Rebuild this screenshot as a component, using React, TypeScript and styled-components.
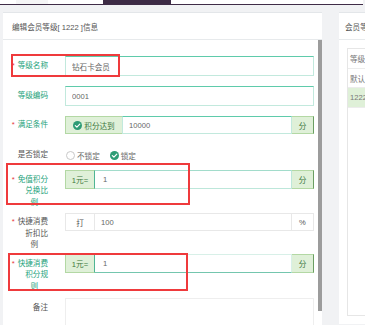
import React from "react";
import styled, { createGlobalStyle } from "styled-components";

const GlobalStyle = createGlobalStyle`
  html, body { margin: 0; padding: 0; width: 365px; height: 325px; overflow: hidden; background: #f1f2f4; }
  body { font-family: "Liberation Sans", "Noto Sans CJK SC", sans-serif; font-size: 7.6px; color: #555; }
  * { box-sizing: border-box; }
`;

const TopBar = styled.div`
  display: flex;
  width: 363px;
  height: 5px;
  background: #fff;
  border-bottom: 1px solid #3f2c47;
`;

const TopTab = styled.div<{ $w: number; $bg: string }>`
  flex: none;
  width: ${(p) => p.$w}px;
  background: ${(p) => p.$bg};
`;

const Main = styled.div`
  display: flex;
  align-items: flex-start;
  gap: 17px;
  padding: 7px 0 0 3px;
  height: 320px;
`;

const Card = styled.div<{ $w: number; $h: number }>`
  position: relative;
  flex: none;
  display: flex;
  flex-direction: column;
  width: ${(p) => p.$w}px;
  height: ${(p) => p.$h}px;
  background: #fff;
  border-top: 1px solid #e3e6e9;
`;

const CardHeader = styled.div<{ $pl: number }>`
  flex: none;
  display: flex;
  align-items: center;
  height: 27px;
  padding-left: ${(p) => p.$pl}px;
  border-bottom: 1px solid #e7eaec;
  color: #555;
  white-space: nowrap;
`;

const FormBody = styled.div`
  position: relative;
  flex: 1;
  padding-top: 16px;
  overflow: hidden;
`;

const ScrollThumb = styled.div`
  position: absolute;
  right: 0;
  top: 0;
  width: 4px;
  height: 271px;
  background: #9c9c9c;
`;

const RedMark = styled.div`
  position: absolute;
  border: 2px solid #ef3a3c;
  pointer-events: none;
`;

const FormRow = styled.div<{ $mb: number }>`
  display: flex;
  align-items: flex-start;
  gap: 17px;
  margin-bottom: ${(p) => p.$mb}px;
`;

const Label = styled.div<{ $green?: boolean; $pt: number }>`
  flex: none;
  width: 45px;
  text-align: right;
  line-height: 11.5px;
  padding-top: ${(p) => p.$pt}px;
  color: ${(p) => (p.$green ? "#23a27a" : "#555")};
`;

const LabelLine = styled.div<{ $last?: boolean }>`
  white-space: nowrap;
  padding-right: ${(p) => (p.$last ? 10 : 0)}px;
`;

const Star = styled.span`
  color: #e8393c;
  margin-right: 3px;
`;

const Control = styled.div<{ $h: number }>`
  flex: none;
  display: flex;
  align-items: stretch;
  width: 249px;
  height: ${(p) => p.$h}px;
`;

type Tone = "focus" | "soft" | "plain" | "under";
const toneBorder: Record<Tone, string> = {
  focus: "border: 1px solid #c2e9dd; border-top-color: #5fcbab;",
  soft: "border: 1px solid #bde7da; border-top-color: #a2dccb;",
  plain: "border: 1px solid #e8e8e8;",
  under: "border: 1px solid #d8f0e8; border-bottom-color: #74c6ae;",
};

const TextBox = styled.input<{ $tone: Tone; $pl: number }>`
  flex: 1;
  min-width: 0;
  margin: 0;
  padding: 0 0 0 ${(p) => p.$pl}px;
  font: inherit;
  color: #666;
  background: #fff;
  outline: none;
  ${(p) => toneBorder[p.$tone]}
`;

const Addon = styled.div<{ $w: number; $green?: boolean; $side: "left" | "right"; $edge?: string }>`
  flex: none;
  display: flex;
  align-items: center;
  justify-content: center;
  gap: 2px;
  width: ${(p) => p.$w}px;
  background: ${(p) => (p.$green ? "#dff0d8" : "#fff")};
  color: ${(p) => (p.$green ? "#3c763d" : "#555")};
  border: 1px solid ${(p) => (p.$green ? "#b3d8a4" : "#e8e8e8")};
  ${(p) => (p.$side === "left" ? "border-right: none;" : "border-left: none;")}
  ${(p) => (p.$edge ? `border-${p.$side === "left" ? "right" : "right"}: 1px solid ${p.$edge};` : "")}
  white-space: nowrap;
`;

const RadioGroup = styled.div`
  display: flex;
  align-items: center;
  padding-left: 1px;
`;

const RadioItem = styled.div<{ $mr: number }>`
  display: flex;
  align-items: center;
  gap: 2px;
  margin-right: ${(p) => p.$mr}px;
  color: #666;
`;

const EmptyCircle = styled.span`
  display: inline-block;
  width: 9px;
  height: 9px;
  border-radius: 50%;
  border: 1px solid #c9c9c9;
  background: #fff;
`;

const TextArea = styled.div`
  width: 249px;
  height: 40px;
  border: 1px solid #eee;
  background: #fff;
`;

const SideBody = styled.div`
  flex: 1;
  padding: 8px 0 8px 8px;
  display: flex;
`;

const Table = styled.div`
  flex: 1;
  border: 1px solid #e6e6e6;
  border-right: none;
  display: flex;
  flex-direction: column;
`;

const TableRow = styled.div<{ $active?: boolean; $h: number }>`
  display: flex;
  align-items: center;
  height: ${(p) => p.$h}px;
  padding-left: 2px;
  border-bottom: 1px solid #ececec;
  background: ${(p) => (p.$active ? "#dff0d8" : "#fff")};
  color: #777;
  white-space: nowrap;
`;

const Check = () => (
  <svg width="9" height="9" viewBox="0 0 9 9">
    <circle cx="4.5" cy="4.5" r="4.5" fill="#2e9c75" />
    <path d="M2.3 4.6 L3.9 6.1 L6.8 3.1" fill="none" stroke="#fff" strokeWidth="1.2" strokeLinecap="round" strokeLinejoin="round" />
  </svg>
);

const pt = (h: number) => (h - 11.5) / 2;

export default function App() {
  return (
    <>
      <GlobalStyle />
      <TopBar>
        <TopTab $w={16} $bg="#fff" />
        <TopTab $w={32} $bg="#f5f5f6" />
        <TopTab $w={55} $bg="#fff" />
        <TopTab $w={68} $bg="#3d2b45" />
      </TopBar>
      <Main>
        <Card $w={319} $h={313}>
          <CardHeader $pl={9}>编辑会员等级[ 1222 ]信息</CardHeader>
          <FormBody>
            <FormRow $mb={10}>
              <Label $green $pt={pt(20)}>
                <LabelLine><Star>*</Star>等级名称</LabelLine>
              </Label>
              <Control $h={20}>
                <TextBox $tone="focus" $pl={6} readOnly value="钻石卡会员" />
              </Control>
            </FormRow>

            <FormRow $mb={10}>
              <Label $green $pt={pt(20)}>
                <LabelLine>等级编码</LabelLine>
              </Label>
              <Control $h={20}>
                <TextBox $tone="focus" $pl={6} readOnly value="0001" />
              </Control>
            </FormRow>

            <FormRow $mb={12}>
              <Label $green $pt={pt(18)}>
                <LabelLine><Star>*</Star>满足条件</LabelLine>
              </Label>
              <Control $h={18}>
                <Addon $w={57} $green $side="left">
                  <Check />
                  积分达到
                </Addon>
                <TextBox $tone="focus" $pl={6} readOnly value="10000" />
                <Addon $w={22} $green $side="right" $edge="#6a9e62">分</Addon>
              </Control>
            </FormRow>

            <FormRow $mb={6}>
              <Label $pt={pt(18)}>
                <LabelLine>是否锁定</LabelLine>
              </Label>
              <Control $h={18}>
                <RadioGroup>
                  <RadioItem $mr={10}>
                    <EmptyCircle />
                    不锁定
                  </RadioItem>
                  <RadioItem $mr={0}>
                    <Check />
                    锁定
                  </RadioItem>
                </RadioGroup>
              </Control>
            </FormRow>

            <FormRow $mb={4.75}>
              <Label $green $pt={pt(19)}>
                <LabelLine><Star>*</Star>免值积分</LabelLine>
                <LabelLine>兑换比</LabelLine>
                <LabelLine $last>例</LabelLine>
              </Label>
              <Control $h={19}>
                <Addon $w={30} $green $side="left" $edge="#4fb594">1元=</Addon>
                <TextBox $tone="soft" $pl={8} readOnly value="1" style={{ borderLeft: "none" }} />
                <Addon $w={22} $green $side="right" $edge="#6a9e62">分</Addon>
              </Control>
            </FormRow>

            <FormRow $mb={3.25}>
              <Label $pt={pt(18)}>
                <LabelLine><Star>*</Star>快捷消费</LabelLine>
                <LabelLine>折扣比</LabelLine>
                <LabelLine $last>例</LabelLine>
              </Label>
              <Control $h={18}>
                <Addon $w={30} $side="left" $edge="#e8e8e8">打</Addon>
                <TextBox $tone="plain" $pl={6} readOnly value="100" style={{ borderLeft: "none" }} />
                <Addon $w={22} $side="right">%</Addon>
              </Control>
            </FormRow>

            <FormRow $mb={5.75}>
              <Label $green $pt={pt(19)}>
                <LabelLine><Star>*</Star>快捷消费</LabelLine>
                <LabelLine>积分规</LabelLine>
                <LabelLine $last>则</LabelLine>
              </Label>
              <Control $h={19}>
                <Addon $w={30} $green $side="left" $edge="#4fb594">1元=</Addon>
                <TextBox $tone="under" $pl={8} readOnly value="1" style={{ borderLeft: "none" }} />
                <Addon $w={22} $green $side="right" $edge="#6a9e62">分</Addon>
              </Control>
            </FormRow>

            <FormRow $mb={0}>
              <Label $pt={4}>
                <LabelLine>备注</LabelLine>
              </Label>
              <TextArea />
            </FormRow>

            <RedMark style={{ left: 8, top: 14, width: 109, height: 23 }} />
            <RedMark style={{ left: 3, top: 123, width: 184, height: 42 }} />
            <RedMark style={{ left: 5, top: 213, width: 180, height: 38 }} />
            <ScrollThumb />
          </FormBody>
        </Card>

        <Card $w={200} $h={312}>
          <CardHeader $pl={6}>会员等级列表</CardHeader>
          <SideBody>
            <Table>
              <TableRow $h={20}>等级名称</TableRow>
              <TableRow $h={19}>默认等级</TableRow>
              <TableRow $h={20} $active>1222</TableRow>
            </Table>
          </SideBody>
        </Card>
      </Main>
    </>
  );
}
